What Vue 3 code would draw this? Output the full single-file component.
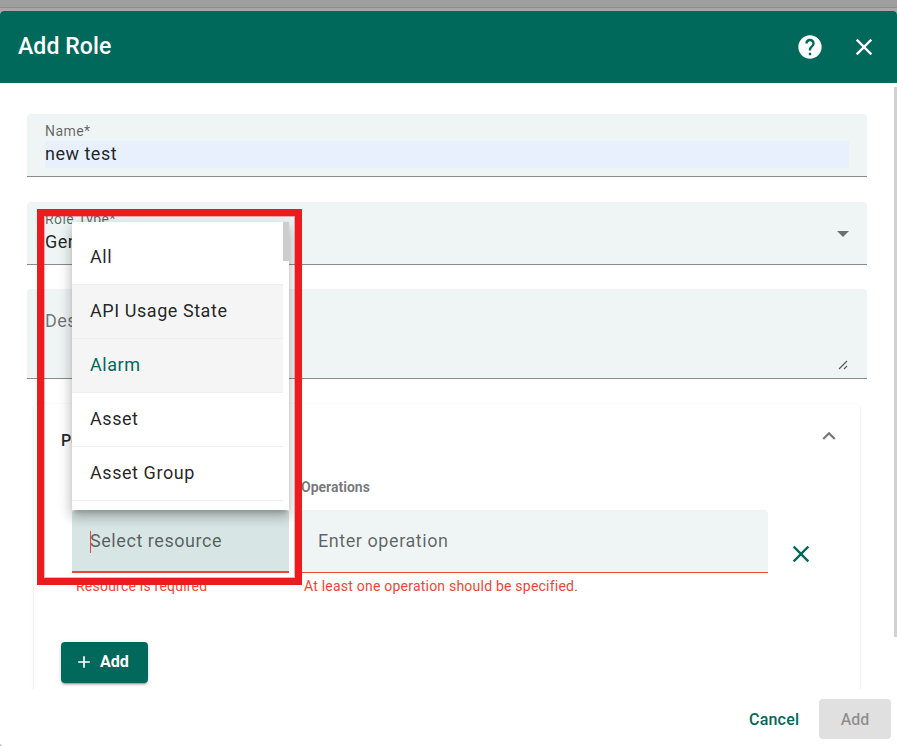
<script setup>
const options = [
  { label: 'All', cls: 'first' },
  { label: 'API Usage State', cls: 'hover' },
  { label: 'Alarm', cls: 'hover active' },
  { label: 'Asset', cls: '' },
  { label: 'Asset Group', cls: '' }
]
</script>

<template>
  <div class="page">
    <div class="backdrop-line"></div>
    <div class="dialog">
      <header class="header">
        <h1 class="title">Add Role</h1>
        <div class="header-actions">
          <svg class="icon-help" viewBox="0 0 24 24"><path fill="#fff" d="M12 2C6.48 2 2 6.48 2 12s4.48 10 10 10 10-4.48 10-10S17.52 2 12 2zm1 17h-2v-2h2v2zm2.07-7.75l-.9.92C13.45 12.9 13 13.5 13 15h-2v-.5c0-1.1.45-2.1 1.17-2.83l1.24-1.26c.37-.36.59-.86.59-1.41 0-1.1-.9-2-2-2s-2 .9-2 2H8c0-2.21 1.79-4 4-4s4 1.79 4 4c0 .88-.36 1.68-.93 2.25z"/></svg>
          <svg class="icon-close" viewBox="0 0 24 24"><path fill="#fff" d="M19 6.41L17.59 5 12 10.59 6.41 5 5 6.41 10.59 12 5 17.59 6.41 19 12 13.41 17.59 19 19 17.59 13.41 12 19 6.41z"/></svg>
        </div>
      </header>

      <main class="body">
        <div class="field field-name">
          <span class="label">Name*</span>
          <div class="autofill">new test</div>
        </div>

        <div class="field field-type">
          <div class="type-text">
            <span class="label">Role Type*</span>
            <div class="value">General</div>
          </div>
          <span class="arrow"></span>
        </div>

        <div class="field field-desc">
          <span class="placeholder">Description</span>
          <svg class="grip" viewBox="0 0 10 10"><path d="M1 9L9 1M6 9L9 6" stroke="#555" stroke-width="1.1" fill="none"/></svg>
        </div>

        <section class="card">
          <div class="card-head">
            <span class="card-title">Permissions</span>
            <svg class="chevron" viewBox="0 0 24 24"><path fill="#757575" d="M12 8l-6 6 1.41 1.41L12 10.83l4.59 4.58L18 14z"/></svg>
          </div>

          <div class="grid-labels">
            <span class="col-label col-res">Resource</span>
            <span class="col-label">Operations</span>
          </div>

          <div class="perm-row">
            <div class="col-res">
              <div class="perm-input res-input">
                <span class="caret"></span>
                <span class="perm-placeholder">Select resource</span>
              </div>
              <div class="error">Resource is required</div>
            </div>
            <div class="col-op">
              <div class="perm-input op-input">
                <span class="perm-placeholder">Enter operation</span>
              </div>
              <div class="error">At least one operation should be specified.</div>
            </div>
            <svg class="icon-remove" viewBox="0 0 24 24"><path fill="#00695c" d="M19 6.41L17.59 5 12 10.59 6.41 5 5 6.41 10.59 12 5 17.59 6.41 19 12 13.41 17.59 19 19 17.59 13.41 12 19 6.41z"/></svg>
          </div>

          <button class="btn-add-row">
            <svg class="icon-plus" viewBox="0 0 24 24"><path fill="#fff" d="M19 13h-6v6h-2v-6H5v-2h6V5h2v6h6v2z"/></svg>
            <span>Add</span>
          </button>
        </section>
      </main>

      <footer class="footer">
        <button class="btn-cancel">Cancel</button>
        <button class="btn-submit">Add</button>
      </footer>
    </div>

    <div class="page-scroll"></div>

    <div class="dropdown">
      <div class="option" v-for="o in options" :key="o.label" :class="o.cls">{{ o.label }}</div>
      <div class="dropdown-rest"></div>
      <div class="drop-scroll"></div>
    </div>

    <div class="annotation"></div>
  </div>
</template>

<style>
html, body { margin: 0; padding: 0; background: #fff; }
</style>

<style scoped>
.page {
  position: relative;
  width: 897px;
  height: 746px;
  overflow: hidden;
  background: #a8a8a8;
  font-family: Roboto, "Liberation Sans", sans-serif;
  display: flex;
  flex-direction: column;
}
.backdrop-line {
  height: 7px;
  flex: none;
  background: #9f9f9f;
  border-bottom: 1px solid #8e8e8e;
  margin-bottom: 3px;
}
.dialog {
  flex: 1;
  min-height: 0;
  display: flex;
  flex-direction: column;
  background: #fff;
  border-radius: 4px 4px 0 4px;
  overflow: hidden;
}
.header {
  flex: none;
  height: 72px;
  background: #00695c;
  display: flex;
  align-items: center;
  justify-content: space-between;
  padding: 0 24px 0 18px;
  color: #fff;
}
.title {
  margin: 0;
  font-size: 23px;
  line-height: 28px;
  font-weight: 500;
  letter-spacing: .1px;
}
.header-actions { display: flex; align-items: center; gap: 26px; }
.icon-help { width: 28px; height: 28px; display: block; }
.icon-close { width: 28px; height: 28px; display: block; margin-right: -5px; }

.body {
  flex: 1;
  min-height: 0;
  overflow: hidden;
  padding: 31px 30px 0 27px;
  display: flex;
  flex-direction: column;
}
.field {
  flex: none;
  box-sizing: border-box;
  background: #eff5f4;
  border-bottom: 1px solid #8a8a8a;
  border-radius: 4px 4px 0 0;
  padding: 0 18px;
  position: relative;
}
.label {
  display: block;
  font-size: 14px;
  line-height: 16px;
  letter-spacing: .45px;
  color: rgba(0,0,0,.6);
}
.field-name { height: 63px; padding-top: 9px; }
.autofill {
  height: 27px;
  margin-top: 2px;
  background: #e8f0fe;
  font-size: 18px;
  line-height: 25px;
  letter-spacing: .5px;
  color: rgba(0,0,0,.87);
}
.field-type {
  height: 63px;
  margin-top: 25px;
  display: flex;
  align-items: flex-start;
  justify-content: space-between;
  padding-top: 9px;
}
.value {
  margin-top: 1px;
  font-size: 18px;
  line-height: 27px;
  letter-spacing: .5px;
  color: rgba(0,0,0,.87);
}
.arrow {
  width: 0;
  height: 0;
  margin: 20px 0 0 0;
  border-left: 6px solid transparent;
  border-right: 6px solid transparent;
  border-top: 6px solid rgba(0,0,0,.54);
}
.field-desc {
  height: 90px;
  margin-top: 24px;
  padding-top: 18px;
}
.placeholder {
  font-size: 18px;
  line-height: 27px;
  letter-spacing: .5px;
  color: rgba(0,0,0,.55);
}
.grip {
  position: absolute;
  right: 19px;
  bottom: 8px;
  width: 10px;
  height: 10px;
}

.card {
  flex: none;
  margin: 25px 7px 0;
  height: 320px;
  box-sizing: border-box;
  background: #fff;
  border-radius: 4px;
  box-shadow: 0 2px 1px -1px rgba(0,0,0,.2), 0 1px 1px 0 rgba(0,0,0,.14), 0 1px 3px 0 rgba(0,0,0,.12);
  padding: 0 0 0 27px;
}
.card-head {
  height: 64px;
  display: flex;
  align-items: center;
  justify-content: space-between;
  padding-right: 18px;
}
.card-title {
  font-size: 16px;
  font-weight: 500;
  letter-spacing: .15px;
  color: rgba(0,0,0,.87);
  padding-top: 8px;
}
.chevron { width: 26px; height: 26px; margin-top: 0; }
.grid-labels {
  display: flex;
  gap: 12px;
  padding-left: 11px;
  height: 42px;
  align-items: flex-start;
  padding-top: 11px;
  box-sizing: border-box;
}
.col-label {
  font-size: 14px;
  font-weight: 700;
  line-height: 16px;
  color: rgba(0,0,0,.54);
}
.col-res { width: 217px; flex: none; }
.col-op { width: 467px; flex: none; }
.perm-row {
  display: flex;
  gap: 12px;
  padding-left: 11px;
  align-items: flex-start;
  height: 132px;
}
.perm-input {
  box-sizing: border-box;
  height: 63px;
  display: flex;
  align-items: center;
  border-radius: 4px 4px 0 0;
  position: relative;
  padding-left: 18px;
}
.res-input { background: #d7e6e4; border-bottom: 2px solid #f44336; }
.op-input { background: #eff5f4; border-bottom: 1px solid #f44336; padding-left: 17px; padding-bottom: 2px; }
.caret {
  position: absolute;
  left: 18px;
  top: 21px;
  width: 1px;
  height: 22px;
  background: #f44336;
}
.perm-placeholder {
  font-size: 18px;
  letter-spacing: .56px;
  color: rgba(0,0,0,.6);
}
.error {
  margin-top: 5px;
  padding-left: 4px;
  font-size: 14px;
  line-height: 16px;
  letter-spacing: .22px;
  color: #f44336;
}
.col-op .error { padding-left: 3px; }
.icon-remove {
  width: 28px;
  height: 28px;
  flex: none;
  margin: 30px 0 0 7px;
}
.btn-add-row {
  width: 87px;
  height: 41px;
  border: 0;
  border-radius: 4px;
  background: #00695c;
  color: #fff;
  font-family: inherit;
  font-size: 16px;
  font-weight: 700;
  display: flex;
  align-items: center;
  justify-content: center;
  gap: 6px;
  padding: 0 6px 2px 0;
  box-shadow: 0 3px 1px -2px rgba(0,0,0,.2), 0 2px 2px 0 rgba(0,0,0,.14), 0 1px 5px 0 rgba(0,0,0,.12);
}
.icon-plus { width: 20px; height: 20px; }

.footer {
  flex: none;
  height: 57px;
  box-sizing: border-box;
  background: #fff;
  position: relative;
  display: flex;
  align-items: flex-start;
  justify-content: flex-end;
  gap: 20px;
  padding: 10px 6px 0 0;
}
.btn-cancel, .btn-submit {
  height: 40px;
  border: 0;
  background: none;
  font-family: inherit;
  font-size: 16px;
  font-weight: 500;
  padding: 0;
}
.btn-cancel { color: #00695c; width: 50px; letter-spacing: .2px; white-space: nowrap; }
.btn-submit {
  width: 72px;
  background: #e0e0e0;
  color: rgba(0,0,0,.38);
  border-radius: 4px;
}

.page-scroll {
  position: absolute;
  left: 894px;
  top: 87px;
  width: 3px;
  height: 550px;
  background: #d2d2d2;
}
.dropdown {
  position: absolute;
  left: 72px;
  top: 222px;
  width: 217px;
  height: 288px;
  box-sizing: border-box;
  padding: 9px 6px 0 0;
  background: #fff;
  box-shadow: 0 5px 5px -3px rgba(0,0,0,.2), 0 8px 10px 1px rgba(0,0,0,.14), 0 3px 14px 2px rgba(0,0,0,.12);
}
.option {
  box-sizing: border-box;
  height: 54px;
  display: flex;
  align-items: center;
  padding: 0 0 3px 18px;
  border-bottom: 1px solid #eeeeee;
  font-size: 18px;
  letter-spacing: .56px;
  color: rgba(0,0,0,.87);
}
.option.hover { background: #f5f5f5; }
.option.active { color: #00695c; }
.drop-scroll {
  position: absolute;
  top: 0;
  right: 0;
  width: 6px;
  height: 39px;
  background: #cdcdcd;
}
.annotation {
  position: absolute;
  left: 37px;
  top: 209px;
  width: 265px;
  height: 376px;
  box-sizing: border-box;
  border: 7px solid #ea1c20;
  box-shadow: inset 0 0 0 1px rgba(234,28,32,.35);
  pointer-events: none;
}
</style>
